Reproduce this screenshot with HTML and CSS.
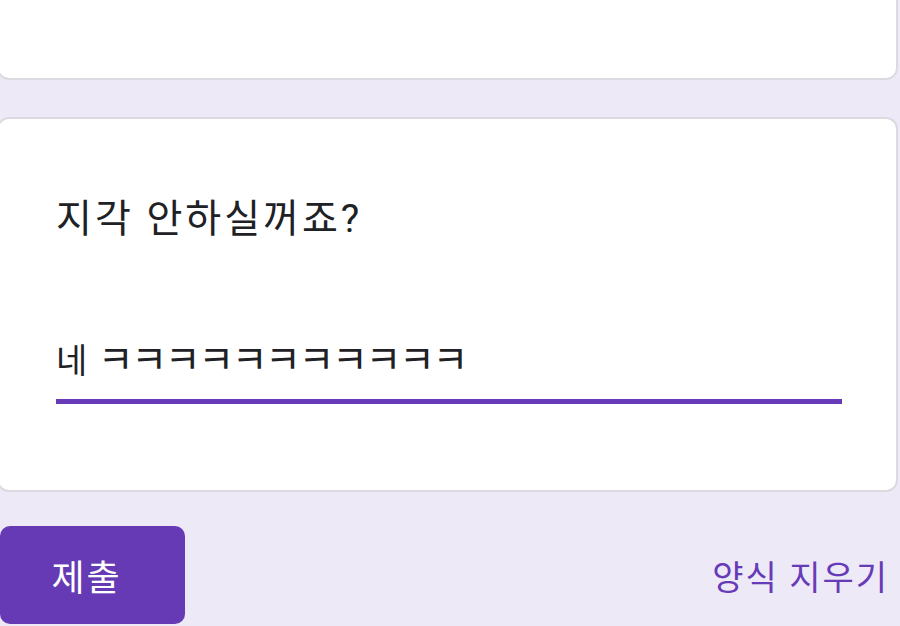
FILE: index.html
```html
<!DOCTYPE html>
<html lang="ko">
<head>
<meta charset="utf-8">
<title>Form</title>
<link rel="stylesheet" href="styles.css">
</head>
<body>
<div class="page">
  <div class="card card-top"></div>
  <div class="card card-question">
    <div class="question-title">지각 안하실꺼죠?</div>
    <div class="answer">
      <div class="answer-text">네 <span class="laugh">ㅋㅋㅋㅋㅋㅋㅋㅋㅋㅋㅋ</span></div>
      <div class="answer-line"></div>
    </div>
  </div>
  <div class="actions">
    <button class="submit">제출</button>
    <span class="clear">양식 지우기</span>
  </div>
</div>
</body>
</html>
```

FILE: styles.css
```css
html, body {
  margin: 0;
  padding: 0;
  background: #ede9f6;
  overflow: hidden;
}
body {
  font-family: "Roboto", "Noto Sans CJK KR", sans-serif;
  width: 900px;
  height: 626px;
}
.page {
  display: flex;
  flex-direction: column;
  margin-left: -3px;
  width: 901px;
}
.card {
  background: #ffffff;
  border: 2px solid #dcdae1;
  border-radius: 12px;
  box-sizing: border-box;
}
.card-top {
  height: 101px;
  margin-top: -21px;
}
.card-question {
  margin-top: 37px;
  height: 375px;
  padding: 73px 54px 0 57px;
  display: flex;
  flex-direction: column;
}
.question-title {
  font-size: 39px;
  line-height: 54px;
  letter-spacing: 3px;
  color: #202124;
}
.answer {
  margin-top: 91px;
  display: flex;
  flex-direction: column;
}
.answer-text {
  font-size: 34px;
  line-height: 48px;
  height: 48px;
  letter-spacing: 1px;
  color: #202124;
}
.laugh {
  font-size: 39px;
  line-height: 1;
  letter-spacing: -2.4px;
}
.answer-line {
  margin-top: 14px;
  height: 5px;
  background: #673ab7;
}
.actions {
  margin-top: 34px;
  display: flex;
  align-items: center;
  justify-content: space-between;
  padding-right: 9px;
}
.submit {
  margin-left: 3px;
  width: 185px;
  height: 98px;
  border: none;
  border-radius: 10px;
  background: #653ab4;
  color: #ffffff;
  font-family: "Roboto", "Noto Sans CJK KR", sans-serif;
  font-size: 36px;
  letter-spacing: 2px;
  padding: 0 12px 0 0;
}
.clear {
  font-size: 34px;
  letter-spacing: 2px;
  color: #673ab7;
}
```
